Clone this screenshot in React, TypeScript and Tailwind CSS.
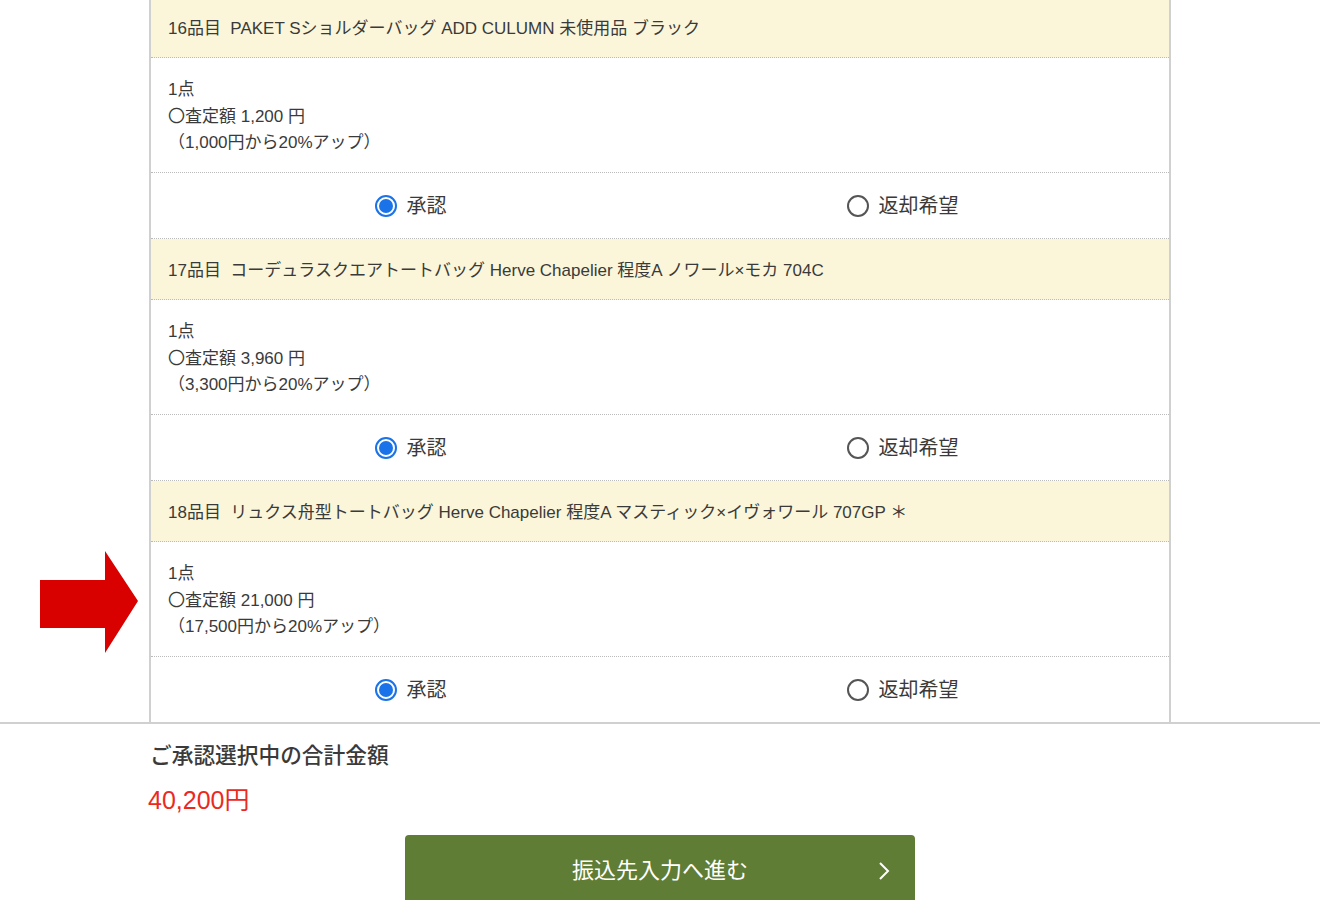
import React from "react";

const items = [
  {
    title: "16品目  PAKET Sショルダーバッグ ADD CULUMN 未使用品 ブラック",
    price: "1,200",
    base: "1,000",
  },
  {
    title: "17品目  コーデュラスクエアトートバッグ Herve Chapelier 程度A ノワール×モカ 704C",
    price: "3,960",
    base: "3,300",
  },
  {
    title: "18品目  リュクス舟型トートバッグ Herve Chapelier 程度A マスティック×イヴォワール 707GP ＊",
    price: "21,000",
    base: "17,500",
  },
];

function Radio({ checked, label }: { checked: boolean; label: string }) {
  return (
    <label className="flex items-center gap-[10px] cursor-pointer">
      {checked ? (
        <span className="flex h-[22px] w-[22px] items-center justify-center rounded-full border-[2px] border-[#1a73e8] bg-white">
          <span className="h-[14px] w-[14px] rounded-full bg-[#1a73e8]" />
        </span>
      ) : (
        <span className="h-[22px] w-[22px] rounded-full border-[2px] border-[#555]" />
      )}
      <span className="text-[20px] text-[#3a3a3a]">{label}</span>
    </label>
  );
}

export default function App() {
  const font = {
    fontFamily: '"Liberation Sans", "Noto Sans CJK JP", sans-serif',
  };

  return (
    <div className="relative min-h-[900px] overflow-hidden bg-white" style={font}>
      {/* red arrow pointing at item 18 */}
      <svg
        className="absolute left-[40px] top-[551px]"
        width="98"
        height="102"
        viewBox="0 0 98 102"
      >
        <polygon points="0,29 65,29 65,0 98,50 65,102 65,77 0,77" fill="#d90000" />
      </svg>

      <div className="mx-auto mt-[-3px] w-[1022px] border-x-2 border-[#d0d0d0]">
        {items.map((item) => (
          <div key={item.title} className="group">
            <div className="flex h-[61px] items-center whitespace-pre border-b border-dotted border-[#bbb] bg-[#fbf6d9] px-[17px] pt-[4px] text-[17px] text-[#3a3a3a]">
              {item.title}
            </div>
            <div className="h-[115px] border-b border-dotted border-[#bbb] px-[17px] pt-[19px] text-[17px] leading-[26.5px] text-[#3a3a3a]">
              <div>1点</div>
              <div>〇査定額 {item.price} 円</div>
              <div>（{item.base}円から20%アップ）</div>
            </div>
            <div className="grid h-[66px] grid-cols-2 items-center border-b border-dotted border-[#bbb] group-last:h-[65px] group-last:border-b-0">
              <div className="flex justify-center pl-[10px]">
                <Radio checked label="承認" />
              </div>
              <div className="flex justify-center pr-[24px]">
                <Radio checked={false} label="返却希望" />
              </div>
            </div>
          </div>
        ))}
      </div>

      <div className="border-t-2 border-[#d0d0d0]">
        <div className="mx-auto w-[1022px] px-[1px]">
          <div className="pt-[16px] text-[21.7px] font-medium text-[#3a3a3a]">
            ご承認選択中の合計金額
          </div>
          <div className="mt-[9px] ml-[-2px] text-[25px] text-[#ea2a1e]">40,200円</div>
        </div>
        <div className="mt-[16px] flex justify-center">
          <button
            type="button"
            className="relative flex h-[70px] w-[510px] items-center justify-center rounded-[4px] bg-[#5f7d35] text-[22px] text-white"
          >
            振込先入力へ進む
            <svg
              className="absolute right-[25px] top-[27px]"
              width="12"
              height="18"
              viewBox="0 0 12 18"
              fill="none"
              stroke="white"
              strokeWidth="2"
            >
              <polyline points="2,1 10,9 2,17" />
            </svg>
          </button>
        </div>
      </div>
    </div>
  );
}
